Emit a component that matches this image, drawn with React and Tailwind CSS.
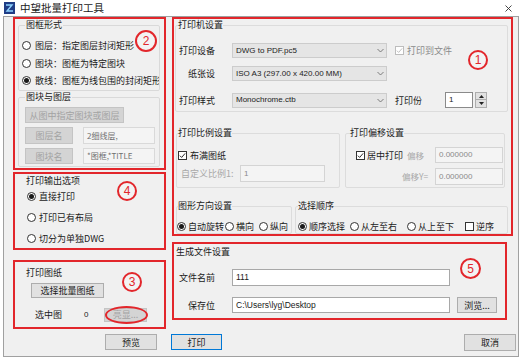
import React from 'react';

const latin = "font-['Liberation_Sans',sans-serif]";

function Radio({ on }) {
  return (
    <span className="flex h-[9px] w-[9px] shrink-0 items-center justify-center rounded-full border border-[#333333] bg-white">
      {on && <span className="h-[5px] w-[5px] rounded-full bg-[#1a1a1a]" />}
    </span>
  );
}

function Check({ on, disabled }) {
  const color = disabled ? '#bdbdbd' : '#222222';
  return (
    <span
      className={
        disabled
          ? 'flex h-[9px] w-[9px] shrink-0 items-center justify-center border border-[#bdbdbd] bg-white'
          : 'flex h-[9px] w-[9px] shrink-0 items-center justify-center border border-[#333333] bg-white'
      }
    >
      {on && (
        <svg viewBox="0 0 8 8" className="h-[7px] w-[7px]">
          <path d="M1 4.2 L3 6.2 L7 1.6" fill="none" stroke={color} strokeWidth="1.1" />
        </svg>
      )}
    </span>
  );
}

function Select({ value }) {
  return (
    <div className="ml-[17px] flex h-[15px] w-[155px] items-center justify-between border border-[#cccccc] bg-[#e5e5e5] pl-[3px] pr-[2px]">
      <span className={`${latin} text-[8px] leading-none text-[#222]`}>{value}</span>
      <svg width="7" height="5" viewBox="0 0 7 5">
        <path d="M0.5 1 L3.5 4 L6.5 1" fill="none" stroke="#707070" strokeWidth="0.9" />
      </svg>
    </div>
  );
}

function Mark({ n, className }) {
  return (
    <div
      className={`absolute flex items-center justify-center rounded-full border-2 border-[#e2262b] bg-[#f3f3f3] text-[12px] leading-none text-[#e2262b] ${latin} ${className}`}
    >
      {n}
    </div>
  );
}

function DisabledBtn({ children, className }) {
  return (
    <div
      className={`flex items-center justify-center border border-[#c4c4c4] bg-[#d4d4d4] text-[9px] leading-none text-[#a3a3a3] ${className}`}
    >
      {children}
    </div>
  );
}

function Btn({ children, className }) {
  return (
    <div
      className={`flex items-center justify-center border border-[#adadad] bg-[#e1e1e1] text-[9px] leading-none text-[#1a1a1a] ${className}`}
    >
      {children}
    </div>
  );
}

export default function App() {
  return (
    <div className="relative h-[359px] w-[523px] overflow-hidden bg-white font-['Noto_Sans_CJK_SC',sans-serif] text-[#1a1a1a]">
      {/* title bar */}
      <div className="flex h-[16px] items-center">
        <svg width="11" height="12" viewBox="0 0 11 12" className="ml-[4px]">
          <rect width="11" height="12" fill="#1f3d86" />
          <path d="M2 3 L8 3 L3 9 L9 9" fill="none" stroke="#8fd3ff" strokeWidth="1.4" />
        </svg>
        <span className="ml-[5px] text-[10.5px] leading-none">中望批量打印工具</span>
        <svg width="7" height="7" viewBox="0 0 7 7" className="ml-auto mr-[11px]">
          <path d="M0.5 0.5 L6.5 6.5 M6.5 0.5 L0.5 6.5" stroke="#333" strokeWidth="0.9" />
        </svg>
      </div>

      {/* client area */}
      <div className="ml-[3px] flex h-[341px] w-[516px] flex-col border border-[#a0a0a0] bg-[#f0f0f0]">
        <div className="flex h-[312px] pl-[9px]">
          {/* left column */}
          <div className="flex w-[153px] flex-col">
            <div className="flex h-[153px] flex-col border-2 border-[#e2262b]">
              <fieldset className="ml-[3px] h-[72px] w-[142px] min-w-0 rounded-[2px] border border-[#d9d9d9]">
                <legend className="ml-[6px] px-[1px] text-[9px] leading-[12px]">图框形式</legend>
                <div className="mt-[6px] flex flex-col">
                  {[
                    ['图层：指定图层封闭矩形', false],
                    ['图块：图框为特定图块', false],
                    ['散线：图框为线包围的封闭矩形', true],
                  ].map(([t, on]) => (
                    <div key={t} className="flex h-[17.5px] items-center gap-[4px] overflow-hidden whitespace-nowrap pl-[3px] text-[9px] leading-none">
                      <Radio on={on} />
                      <span>{t}</span>
                    </div>
                  ))}
                </div>
              </fieldset>
              <fieldset className="ml-[3px] h-[76px] w-[142px] min-w-0 rounded-[2px] border border-[#d9d9d9]">
                <legend className="ml-[6px] px-[1px] text-[9px] leading-[12px]">图块与图层</legend>
                <DisabledBtn className="ml-[6px] mt-[4px] h-[16px] w-[99px]">从图中指定图块或图层</DisabledBtn>
                <div className="ml-[6px] mt-[4px] flex h-[17px]">
                  <DisabledBtn className="h-[17px] w-[48px]">图层名</DisabledBtn>
                  <div className="ml-[10px] flex h-[17px] w-[72px] items-center border border-[#d9d9d9] bg-[#f4f4f4] pl-[3px] text-[8px] leading-none text-[#707070]">
                    2细线层,
                  </div>
                </div>
                <div className="ml-[6px] mt-[4px] flex h-[16px]">
                  <DisabledBtn className="h-[16px] w-[48px]">图块名</DisabledBtn>
                  <div className="ml-[10px] flex h-[16px] w-[72px] items-center border border-[#d9d9d9] bg-[#f4f4f4] pl-[3px] text-[8px] leading-none text-[#707070]">
                    *图框,*TITLE
                  </div>
                </div>
              </fieldset>
            </div>

            <div className="mt-[2px] flex h-[78px] flex-col border-2 border-[#e2262b]">
              <div className="ml-[11px] mt-[1px] h-[12px] text-[9px] leading-[12px]">打印输出选项</div>
              <div className="mt-[-1px] flex flex-col">
                {[
                  ['直接打印', true],
                  ['打印已有布局', false],
                  ['切分为单独DWG', false],
                ].map(([t, on]) => (
                  <div key={t} className="ml-[12px] flex h-[21px] items-center gap-[3px] text-[9px] leading-none">
                    <Radio on={on} />
                    <span>{t}</span>
                  </div>
                ))}
              </div>
            </div>

            <div className="mt-[10px] flex h-[69px] flex-col border-2 border-[#e2262b]">
              <div className="ml-[11px] mt-[5px] h-[12px] text-[9px] leading-[12px]">打印图纸</div>
              <Btn className="ml-[16px] mt-[4px] h-[15px] w-[73px]">选择批量图纸</Btn>
              <div className="mt-[9px] flex h-[15px] items-center">
                <span className="ml-[20px] w-[49px] text-[9px] leading-none">选中图</span>
                <span className={`w-[20px] text-[8px] leading-none ${latin}`}>0</span>
                <div className="relative">
                  <DisabledBtn className="h-[14px] w-[43px]">亮显...</DisabledBtn>
                  <div className="absolute -inset-y-[2px] -right-[1px] left-[1px] rounded-[50%] border-2 border-[#e2262b]" />
                </div>
              </div>
            </div>
          </div>

          {/* right column */}
          <div className="ml-[6px] flex w-[341px] flex-col">
            <div className="flex h-[219px] flex-col border-2 border-[#e2262b]">
              <fieldset className="ml-[1px] h-[93px] w-[333px] min-w-0 rounded-[2px] border border-[#dcdcdc]">
                <legend className="ml-[2px] text-[9px] leading-[12px]">打印机设置</legend>
                <div className="mt-[12px] flex h-[15px] items-center">
                  <span className="ml-[2px] w-[37px] text-right text-[9px] leading-none">打印设备</span>
                  <Select value="DWG to PDF.pc5" />
                  <span className="ml-[8px]">
                    <Check on disabled />
                  </span>
                  <span className="ml-[3px] text-[9px] leading-none text-[#8a8a8a]">打印到文件</span>
                </div>
                <div className="mt-[8px] flex h-[15px] items-center">
                  <span className="ml-[2px] w-[37px] text-right text-[9px] leading-none">纸张设</span>
                  <Select value="ISO A3 (297.00 x 420.00 MM)" />
                </div>
                <div className="mt-[11px] flex h-[16px] items-center">
                  <span className="ml-[2px] w-[37px] text-right text-[9px] leading-none">打印样式</span>
                  <Select value="Monochrome.ctb" />
                  <span className="ml-[8px] w-[50px] text-[9px] leading-none">打印份</span>
                  <div className={`flex h-[16px] w-[28px] items-center border border-[#8a8a8a] bg-white pl-[3px] text-[8px] leading-none ${latin}`}>
                    1
                  </div>
                  <div className="ml-[2px] flex h-[16px] w-[12px] flex-col">
                    <div className="flex h-[8px] items-center justify-center border border-[#adadad] bg-[#e1e1e1]">
                      <svg width="5" height="3" viewBox="0 0 5 3">
                        <path d="M0 3 L2.5 0 L5 3 Z" fill="#222" />
                      </svg>
                    </div>
                    <div className="flex h-[8px] items-center justify-center border border-t-0 border-[#adadad] bg-[#e1e1e1]">
                      <svg width="5" height="3" viewBox="0 0 5 3">
                        <path d="M0 0 L2.5 3 L5 0 Z" fill="#222" />
                      </svg>
                    </div>
                  </div>
                </div>
              </fieldset>

              <div className="mt-[15px] flex">
                <fieldset className="ml-[2px] h-[61px] w-[164px] min-w-0 rounded-[2px] border border-[#dcdcdc]">
                  <legend className="ml-[1px] text-[9px] leading-[12px]">打印比例设置</legend>
                  <div className="mt-[10px] flex h-[12px] items-center gap-[3px] pl-[1px] text-[9px] leading-none">
                    <Check on />
                    <span>布满图纸</span>
                  </div>
                  <div className="mt-[4px] flex h-[17px] items-center">
                    <span className="ml-[4px] w-[59px] whitespace-nowrap text-[9px] leading-none text-[#a8a8a8]">自定义比例1:</span>
                    <div className={`flex h-[17px] w-[85px] items-center border border-[#d4d4d4] bg-[#f4f4f4] pl-[3px] text-[8px] leading-none text-[#8a8a8a] ${latin}`}>
                      1
                    </div>
                  </div>
                </fieldset>
                <fieldset className="ml-[5px] h-[61px] w-[160px] min-w-0 rounded-[2px] border border-[#dcdcdc]">
                  <legend className="ml-[4px] text-[9px] leading-[12px]">打印偏移设置</legend>
                  <div className="mt-[8px] flex h-[16px] items-center">
                    <span className="ml-[10px]">
                      <Check on />
                    </span>
                    <span className="ml-[2px] w-[40px] whitespace-nowrap text-[9px] leading-none">居中打印</span>
                    <span className="w-[28px] text-[8.5px] leading-none text-[#a8a8a8]">偏移</span>
                    <div className={`flex h-[16px] w-[68px] items-center border border-[#d4d4d4] bg-[#f4f4f4] pl-[3px] text-[8px] leading-none text-[#8a8a8a] ${latin}`}>
                      0.000000
                    </div>
                  </div>
                  <div className="mt-[5px] flex h-[17px] items-center pl-[56px]">
                    <span className="w-[33px] whitespace-nowrap text-[8.5px] leading-none text-[#a8a8a8]">偏移Y=</span>
                    <div className={`flex h-[17px] w-[68px] items-center border border-[#d4d4d4] bg-[#f4f4f4] pl-[3px] text-[8px] leading-none text-[#8a8a8a] ${latin}`}>
                      0.000000
                    </div>
                  </div>
                </fieldset>
              </div>

              <div className="mt-[12px] flex">
                <fieldset className="ml-[2px] h-[34px] w-[116px] min-w-0 rounded-[2px] border border-[#dcdcdc]">
                  <legend className="ml-[1px] text-[9px] leading-[12px]">图形方向设置</legend>
                  <div className="mt-[7px] flex h-[14px] items-center text-[9px] leading-none">
                    <span className="flex items-center gap-[2px]">
                      <Radio on />
                      <span>自动旋转</span>
                    </span>
                    <span className="ml-[1px] flex items-center gap-[2px]">
                      <Radio />
                      <span>横向</span>
                    </span>
                    <span className="ml-[5px] flex items-center gap-[2px]">
                      <Radio />
                      <span>纵向</span>
                    </span>
                  </div>
                </fieldset>
                <fieldset className="ml-[3px] h-[34px] w-[213px] min-w-0 rounded-[2px] border border-[#dcdcdc]">
                  <legend className="ml-[2px] text-[9px] leading-[12px]">选择顺序</legend>
                  <div className="mt-[7px] flex h-[14px] items-center text-[9px] leading-none">
                    <span className="ml-[2px] flex items-center gap-[2px]">
                      <Radio on />
                      <span>顺序选择</span>
                    </span>
                    <span className="ml-[5px] flex items-center gap-[2px]">
                      <Radio />
                      <span>从左至右</span>
                    </span>
                    <span className="ml-[10px] flex items-center gap-[2px]">
                      <Radio />
                      <span>从上至下</span>
                    </span>
                    <span className="ml-[11px] flex items-center gap-[2px]">
                      <Check />
                      <span>逆序</span>
                    </span>
                  </div>
                </fieldset>
              </div>
            </div>

            <div className="mt-[6px] flex h-[78px] w-[335px] flex-col border-2 border-[#e2262b]">
              <div className="ml-[2px] mt-[2px] h-[12px] text-[9px] leading-[12px]">生成文件设置</div>
              <div className="mt-[11px] flex h-[17px] items-center">
                <span className="w-[41px] text-right text-[9px] leading-none">文件名前</span>
                <div className={`ml-[17px] flex h-[17px] w-[218px] items-center border border-[#a8a8a8] bg-white pl-[3px] text-[8.5px] leading-none ${latin}`}>
                  111
                </div>
              </div>
              <div className="mt-[11px] flex h-[16px] items-center">
                <span className="w-[41px] text-right text-[9px] leading-none">保存位</span>
                <div className={`ml-[17px] flex h-[16px] w-[218px] items-center border border-[#a8a8a8] bg-white pl-[3px] text-[8.5px] leading-none ${latin}`}>
                  {'C:\\Users\\lyg\\Desktop'}
                </div>
                <Btn className="ml-[7px] h-[16px] w-[40px]">浏览...</Btn>
              </div>
            </div>
          </div>
        </div>

        {/* bottom buttons */}
        <div className="mt-[5px] flex h-[17px] items-start">
          <Btn className="ml-[101px] h-[16px] w-[52px]">预览</Btn>
          <div className="ml-[14px] flex h-[16px] w-[51px] items-center justify-center border border-[#0078d7] bg-[#e1e1e1] text-[9px] leading-none">
            打印
          </div>
          <Btn className="ml-auto mr-[2px] h-[17px] w-[52px]">取消</Btn>
        </div>
      </div>

      <Mark n="2" className="left-[135px] top-[30px] h-[22px] w-[22px]" />
      <Mark n="1" className="left-[468px] top-[50px] h-[20px] w-[20px]" />
      <Mark n="4" className="left-[117px] top-[181px] h-[20px] w-[20px]" />
      <Mark n="3" className="left-[122px] top-[272px] h-[20px] w-[20px]" />
      <Mark n="5" className="left-[460px] top-[258px] h-[21px] w-[21px]" />
    </div>
  );
}
